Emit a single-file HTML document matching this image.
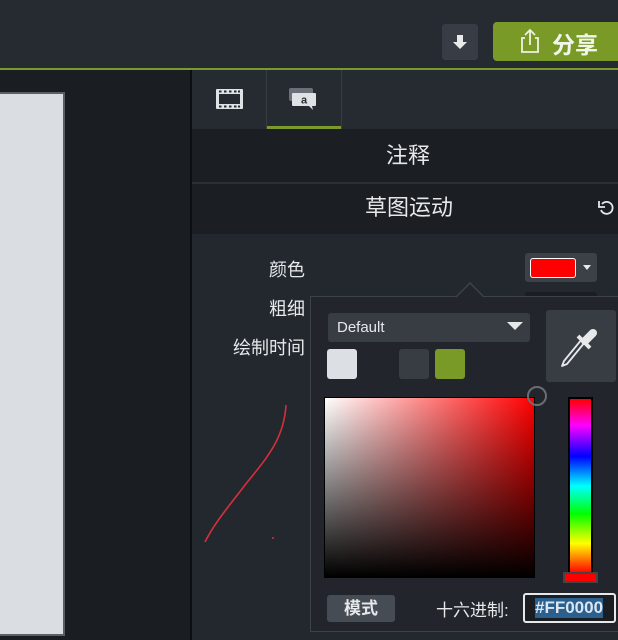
<!DOCTYPE html>
<html><head><meta charset="utf-8"><style>
*{margin:0;padding:0;box-sizing:border-box}
body{width:618px;height:640px;overflow:hidden;background:#23272d;font-family:"Liberation Sans","Noto Sans CJK SC",sans-serif;position:relative;color:#e6e8ea}
.a{position:absolute}
</style></head><body>
<div class="a" style="left:0;top:0;width:618px;height:68px;background:#262a31"></div>
<div class="a" style="left:0;top:68px;width:618px;height:2px;background:#7c9a2c"></div>
<div class="a" style="left:442px;top:24px;width:36px;height:36px;background:#383d45;border-radius:3px"></div>
<svg class="a" style="left:450px;top:32px" width="20" height="20"><path d="M7 3h6v7h4l-7 7-7-7h4z" fill="#e8eaec"/></svg>
<div class="a" style="left:493px;top:22px;width:130px;height:39px;background:#7a9a28;border-radius:4px"></div>
<svg class="a" style="left:518px;top:27px" width="24" height="28"><path d="M7 11H4v14h16V11h-3M12 18V3M7 8l5-5 5 5" fill="none" stroke="#eef2e0" stroke-width="1.8"/></svg>
<div class="a" style="left:552px;top:26px;font-size:23px;font-weight:bold;color:#f2f5ea">分享</div>
<div class="a" style="left:0;top:70px;width:190px;height:570px;background:#1a1d21"></div>
<div class="a" style="left:0;top:92px;width:65px;height:544px;background:#dadee3;border:2px solid #5a5f66;border-left:none"></div>
<div class="a" style="left:190px;top:70px;width:2px;height:570px;background:#0c0d0f"></div>
<div class="a" style="left:192px;top:70px;width:426px;height:59px;background:#262a31"></div>
<div class="a" style="left:266px;top:70px;width:1px;height:59px;background:#383c43"></div>
<div class="a" style="left:341px;top:70px;width:1px;height:59px;background:#383c43"></div>
<div class="a" style="left:267px;top:126px;width:74px;height:3px;background:#7c9a2c"></div>
<svg class="a" style="left:214px;top:87px" width="30" height="24"><rect x="2" y="2" width="27" height="20" rx="1" fill="#e0e3e6"/><rect x="5" y="7" width="21" height="10" fill="#262a31"/><g fill="#262a31"><rect x="5" y="3.5" width="2.5" height="2"/><rect x="10" y="3.5" width="2.5" height="2"/><rect x="15" y="3.5" width="2.5" height="2"/><rect x="20" y="3.5" width="2.5" height="2"/><rect x="24" y="3.5" width="2" height="2"/><rect x="5" y="18.5" width="2.5" height="2"/><rect x="10" y="18.5" width="2.5" height="2"/><rect x="15" y="18.5" width="2.5" height="2"/><rect x="20" y="18.5" width="2.5" height="2"/><rect x="24" y="18.5" width="2" height="2"/></g></svg>
<svg class="a" style="left:287px;top:86px" width="34" height="28"><rect x="2" y="2" width="24" height="13" rx="2" fill="#6b7078"/><path d="M6 7h22a1 1 0 0 1 1 1v11a1 1 0 0 1-1 1h-3l1 4-4-4H6a1 1 0 0 1-1-1V8a1 1 0 0 1 1-1z" fill="#dfe2e5"/><text x="17" y="17.5" font-size="11" font-weight="bold" fill="#2a2d33" font-family="Liberation Sans" text-anchor="middle">a</text></svg>
<div class="a" style="left:192px;top:129px;width:426px;height:53px;background:#1b1e22;text-align:center;line-height:53px;font-size:22px;padding-left:6px">注释</div>
<div class="a" style="left:192px;top:182px;width:426px;height:2px;background:#2c3036"></div>
<div class="a" style="left:192px;top:184px;width:426px;height:50px;background:#1b1e22;text-align:center;line-height:48px;font-size:22px;padding-left:8px">草图运动</div>
<svg class="a" style="left:597px;top:198px" width="18" height="20"><path d="M5 6a6 6 0 1 1-1 6" fill="none" stroke="#e6e8ea" stroke-width="1.8"/><path d="M2 3v6h6" fill="none" stroke="#e6e8ea" stroke-width="1.8"/></svg>
<div class="a" style="left:192px;top:234px;width:426px;height:406px;background:#23272e"></div>
<div class="a" style="left:269px;top:256px;font-size:18px">颜色</div>
<div class="a" style="left:269px;top:295px;font-size:18px">粗细</div>
<div class="a" style="left:233px;top:334px;font-size:18px">绘制时间</div>
<div class="a" style="left:525px;top:253px;width:72px;height:29px;background:#3c4148;border-radius:3px"></div>
<div class="a" style="left:530px;top:258px;width:46px;height:20px;background:#f00;border:1.5px solid #fff;border-radius:3px"></div>
<svg class="a" style="left:582px;top:264px" width="10" height="8"><path d="M1 1h8L5 6z" fill="#e6e8ea"/></svg>
<div class="a" style="left:525px;top:292px;width:72px;height:8px;background:#1a1d21;border-radius:3px"></div>
<svg class="a" style="left:200px;top:400px" width="100" height="150"><path d="M86 5C84 40 65 60 45 85 30 105 15 122 5 142" fill="none" stroke="#d8303a" stroke-width="1.6"/><circle cx="73" cy="138" r="1" fill="#d8303a"/></svg>
<div class="a" style="left:310px;top:296px;width:320px;height:336px;background:#22262c;border:1.5px solid #3d4249"></div>
<svg class="a" style="left:456px;top:282px" width="30" height="16"><path d="M0 15L14 1 28 15" fill="#22262c" stroke="#3d4249" stroke-width="1.5"/></svg>
<div class="a" style="left:328px;top:313px;width:202px;height:29px;background:#383d44;border-radius:3px;font-size:15px;line-height:29px;padding-left:9px">Default</div>
<svg class="a" style="left:507px;top:322px" width="16" height="10"><path d="M0 0h16L8 8z" fill="#e6e8ea"/></svg>
<div class="a" style="left:546px;top:310px;width:70px;height:72px;background:#383d44;border-radius:3px"></div>
<svg class="a" style="left:558px;top:322px" width="46" height="48"><path d="M24 17L6 39l-2 5 5-2 18-22" fill="none" stroke="#e6e8ea" stroke-width="1.8" stroke-linejoin="round"/><path d="M20 14l12 12" stroke="#e6e8ea" stroke-width="4"/><path d="M27 19l8-8" stroke="#e6e8ea" stroke-width="8" stroke-linecap="round"/></svg>
<div class="a" style="left:327px;top:349px;width:30px;height:30px;background:#dcdfe4;border-radius:3px"></div>
<div class="a" style="left:399px;top:349px;width:30px;height:30px;background:#383d44;border-radius:3px"></div>
<div class="a" style="left:435px;top:349px;width:30px;height:30px;background:#7a9a28;border-radius:3px"></div>
<div class="a" style="left:324px;top:397px;width:211px;height:181px;border:1px solid #000;background:linear-gradient(to top,#000,rgba(0,0,0,0)),linear-gradient(to right,#fff,#f00)"></div>
<div class="a" style="left:527px;top:386px;width:20px;height:20px;border:2px solid #6a6e74;border-radius:50%"></div>
<div class="a" style="left:568px;top:397px;width:25px;height:178px;border:2px solid #000;background:linear-gradient(to bottom,#f00,#f0f 15%,#00f 33%,#0ff 50%,#0f0 66%,#ff0 83%,#f00)"></div>
<div class="a" style="left:563px;top:572px;width:35px;height:11px;background:#f00;border:2px solid #444"></div>
<div class="a" style="left:327px;top:595px;width:68px;height:27px;background:#464c53;border-radius:3px;text-align:center;line-height:27px;font-size:17px;font-weight:bold">模式</div>
<div class="a" style="left:436px;top:596px;font-size:17px">十六进制:</div>
<div class="a" style="left:523px;top:593px;width:93px;height:30px;background:#1a1d21;border:2px solid #e6e8ea;border-radius:3px"></div>
<div class="a" style="left:535px;top:598px;height:20px;background:#2a5f8e;color:#dce6f0;font-size:17px;line-height:20px;font-weight:bold">#FF0000</div>
</body></html>
